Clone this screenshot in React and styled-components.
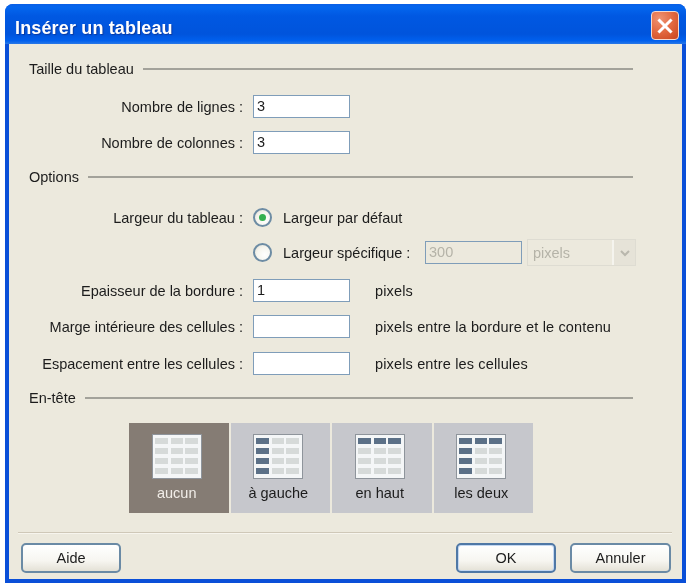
import React from "react";
import styled, { createGlobalStyle } from "styled-components";

const Global = createGlobalStyle`
  html, body { margin: 0; padding: 0; background: #fff; }
  body { font-family: "Liberation Sans", Arial, sans-serif; font-size: 14.5px; color: #1c1c1c; }
`;

const Page = styled.div`
  width: 690px;
  height: 584px;
  padding: 4px 4px 0 5px;
  box-sizing: border-box;
  overflow: hidden;
`;
const Win = styled.div`
  height: 579px;
  display: flex;
  flex-direction: column;
  border-radius: 8px 8px 0 0;
  background: #0a4fd8;
  overflow: hidden;
  filter: blur(0.35px);
`;
const TitleBar = styled.div`
  height: 40px;
  flex: none;
  display: flex;
  align-items: center;
  justify-content: space-between;
  padding: 0 7px 0 10px;
  box-sizing: border-box;
  background: linear-gradient(180deg, #0a5fe6 0%, #0466ee 8%, #0058e2 30%, #0054dc 75%, #0060ee 92%, #2a78e6 100%);
`;
const Title = styled.div`
  color: #fff;
  font-weight: 700;
  font-size: 18px;
  letter-spacing: 0.15px;
  margin-top: 8px;
  text-shadow: 1px 1px 1px #0a3aa0;
`;
const CloseBtn = styled.div`
  width: 28px;
  height: 29px;
  margin-top: 3px;
  box-sizing: border-box;
  border: 1px solid #f3d9cf;
  border-radius: 4px;
  display: flex;
  align-items: center;
  justify-content: center;
  background: radial-gradient(circle at 30% 25%, #ee9373 0%, #e2683f 50%, #c9441f 100%);
`;
const Client = styled.div`
  flex: 1;
  margin: 0 4px 4px 4px;
  background: #ece9dd;
  padding: 0 10px 0 8px;
  display: flex;
  flex-direction: column;
`;
const Section = styled.div`
  display: flex;
  align-items: center;
  gap: 9px;
  height: 20px;
  margin-top: ${(p) => p.$top}px;
  padding-left: 12px;
  margin-right: 39px;
  &::after {
    content: "";
    flex: 1;
    height: 2px;
    background: #a3a29a;
  }
`;
const Row = styled.div`
  display: flex;
  align-items: center;
  height: ${(p) => p.$h || 23}px;
  margin-top: ${(p) => p.$top}px;
`;
const Label = styled.div`
  width: 226px;
  padding-right: 10px;
  box-sizing: content-box;
  text-align: right;
  white-space: nowrap;
  flex: none;
`;
const Input = styled.div`
  width: 97px;
  height: 23px;
  box-sizing: border-box;
  border: 1px solid #7f9db9;
  background: ${(p) => (p.$disabled ? "#ece9dd" : "#fff")};
  color: ${(p) => (p.$disabled ? "#b5b3a8" : "#1c1c1c")};
  padding: 0 3px;
  line-height: 21px;
  flex: none;
`;
const Unit = styled.div`
  margin-left: 25px;
  white-space: nowrap;
  letter-spacing: 0.15px;
`;
const Radio = styled.span`
  width: 19px;
  height: 19px;
  box-sizing: border-box;
  flex: none;
  border-radius: 50%;
  border: 2px solid #6d8ca4;
  background: radial-gradient(circle at 65% 65%, #fff 0%, #f6f5ee 55%, #dcdad0 100%);
  display: flex;
  align-items: center;
  justify-content: center;
  &::after {
    content: "";
    display: ${(p) => (p.$on ? "block" : "none")};
    width: 7px;
    height: 7px;
    border-radius: 50%;
    background: #35b04f;
  }
`;
const RadioText = styled.div`
  margin-left: 11px;
  white-space: nowrap;
  width: ${(p) => (p.$w ? p.$w + "px" : "auto")};
  flex: none;
`;
const Select = styled.div`
  margin-left: 5px;
  width: 109px;
  height: 27px;
  box-sizing: border-box;
  border: 1px solid #dedcd2;
  display: flex;
  align-items: center;
  justify-content: space-between;
  color: #b5b3a8;
  padding-left: 5px;
  flex: none;
`;
const SelectArrow = styled.span`
  width: 23px;
  height: 100%;
  display: flex;
  align-items: center;
  justify-content: center;
  background: #e6e3d8;
  border-left: 2px solid #f5f4ee;
  box-sizing: border-box;
`;
const TileRow = styled.div`
  display: flex;
  gap: 2px;
  margin-top: 15px;
  margin-left: 112px;
`;
const Tile = styled.div`
  width: 99.5px;
  height: 90px;
  flex: none;
  display: flex;
  flex-direction: column;
  align-items: center;
  padding: 11px 4px 0 0;
  box-sizing: border-box;
  background: ${(p) => (p.$on ? "#857c74" : "#c6c7cc")};
  color: ${(p) => (p.$on ? "#f1ede8" : "#1c1c1c")};
`;
const TileLabel = styled.div`
  margin-top: 4px;
  line-height: 20px;
`;
const Separator = styled.div`
  height: 1px;
  background: #cfc8b8;
  margin: 19px 0 9px 1px;
  border-bottom: 1px solid #f7f5ee;
`;
const Footer = styled.div`
  display: flex;
  padding: 0 0 0 4px;
`;
const Button = styled.div`
  width: ${(p) => p.$w || 100}px;
  height: 30px;
  flex: none;
  box-sizing: border-box;
  margin-left: ${(p) => p.$left || 0}px;
  border: 2px solid ${(p) => (p.$primary ? "#4f78a6" : "#6a8aa5")};
  border-radius: 5px;
  background: linear-gradient(180deg, #fff 0%, #f7f6f1 60%, #e4e1d6 100%);
  box-shadow: ${(p) => (p.$primary ? "inset 0 0 0 1px #c4d8f2" : "none")};
  display: flex;
  align-items: center;
  justify-content: center;
  color: #1c1c1c;
`;

const COLS = [
  [3, 13],
  [19, 12],
  [33, 13],
];
const ROWS = [4, 14, 24, 34];

function TableIcon({ left, top }) {
  return (
    <svg width="50" height="45" viewBox="0 0 50 45">
      <rect x="0" y="0" width="50" height="45" fill="#8e949b" />
      <rect x="1" y="1" width="48" height="43" fill="#f4f6f7" />
      {ROWS.map((y, r) =>
        COLS.map(([x, w], c) => {
          const dark = (left && c === 0) || (top && r === 0);
          return (
            <rect
              key={`${r}-${c}`}
              x={x}
              y={y}
              width={w}
              height="6"
              fill={dark ? "#5b7087" : "#d6dad9"}
            />
          );
        })
      )}
    </svg>
  );
}

const tiles = [
  { t: "aucun", on: true },
  { t: "à gauche", left: true },
  { t: "en haut", top: true },
  { t: "les deux", left: true, top: true },
];

export default function App() {
  return (
    <>
      <Global />
      <Page>
        <Win>
          <TitleBar>
            <Title>Insérer un tableau</Title>
            <CloseBtn>
              <svg width="18" height="18" viewBox="0 0 18 18">
                <path d="M3.5 3.5L14.5 14.5M14.5 3.5L3.5 14.5" stroke="#fff" strokeWidth="3" strokeLinecap="square" fill="none" />
              </svg>
            </CloseBtn>
          </TitleBar>
          <Client>
            <Section $top={15}>Taille du tableau</Section>
            <Row $top={16}>
              <Label>Nombre de lignes :</Label>
              <Input>3</Input>
            </Row>
            <Row $top={13}>
              <Label>Nombre de colonnes :</Label>
              <Input>3</Input>
            </Row>
            <Section $top={13}>Options</Section>
            <Row $top={19} $h={23}>
              <Label>Largeur du tableau :</Label>
              <Radio $on />
              <RadioText>Largeur par défaut</RadioText>
            </Row>
            <Row $top={10} $h={27}>
              <Label>&nbsp;</Label>
              <Radio />
              <RadioText $w={142}>Largeur spécifique :</RadioText>
              <Input $disabled>300</Input>
              <Select>
                pixels
                <SelectArrow>
                  <svg width="12" height="12" viewBox="0 0 12 12">
                    <path d="M2 4L6 8L10 4" stroke="#b9b7ad" strokeWidth="2" fill="none" />
                  </svg>
                </SelectArrow>
              </Select>
            </Row>
            <Row $top={13}>
              <Label>Epaisseur de la bordure :</Label>
              <Input>1</Input>
              <Unit>pixels</Unit>
            </Row>
            <Row $top={13}>
              <Label>Marge intérieure des cellules :</Label>
              <Input />
              <Unit>pixels entre la bordure et le contenu</Unit>
            </Row>
            <Row $top={14}>
              <Label>Espacement entre les cellules :</Label>
              <Input />
              <Unit>pixels entre les cellules</Unit>
            </Row>
            <Section $top={13}>En-tête</Section>
            <TileRow>
              {tiles.map((x) => (
                <Tile key={x.t} $on={x.on}>
                  <TableIcon left={x.left} top={x.top} />
                  <TileLabel>{x.t}</TileLabel>
                </Tile>
              ))}
            </TileRow>
            <Separator />
            <Footer>
              <Button>Aide</Button>
              <Button $primary $left={335}>OK</Button>
              <Button $left={14} $w={101}>Annuler</Button>
            </Footer>
          </Client>
        </Win>
      </Page>
    </>
  );
}
